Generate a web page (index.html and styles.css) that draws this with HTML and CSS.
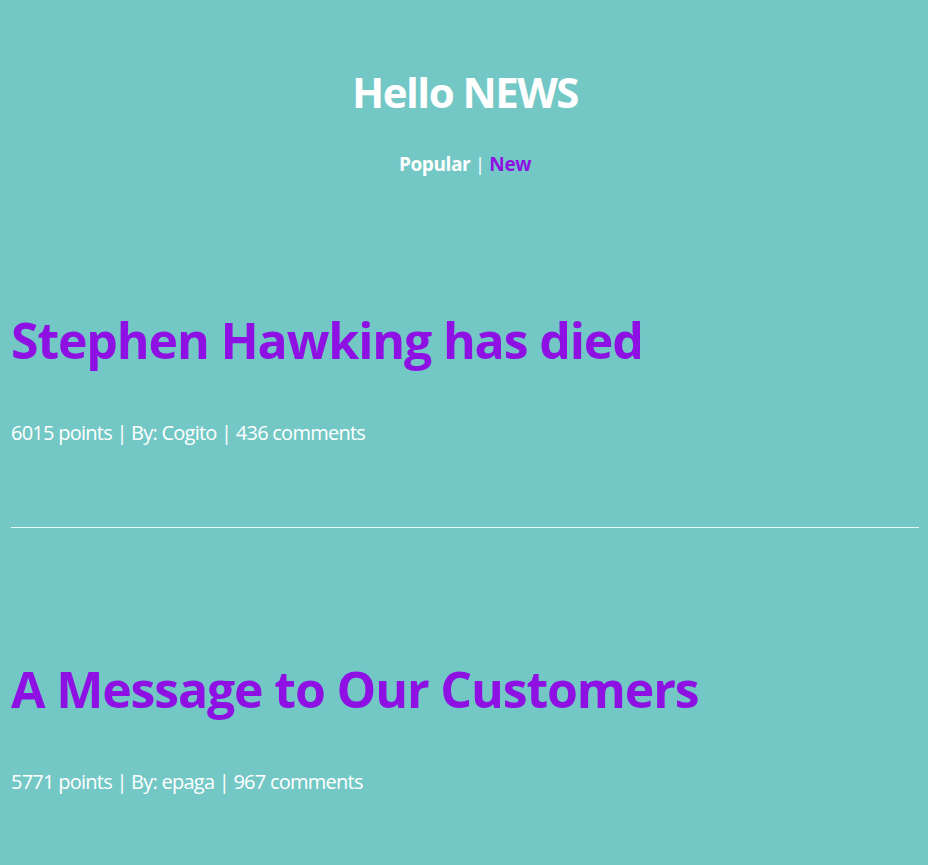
FILE: index.html
```html
<!DOCTYPE html>
<html lang="en">
<head>
<meta charset="utf-8">
<title>Hello NEWS</title>
<link rel="stylesheet" href="styles.css">
</head>
<body>
<div class="page">
  <header class="header">
    <h1 class="site-title">Hello NEWS</h1>
    <nav class="nav"><a class="nav-link nav-active" href="#">Popular</a> <span class="sep">|</span> <a class="nav-link" href="#">New</a></nav>
  </header>
  <main class="stories">
    <article class="story">
      <h2 class="story-title"><a href="#">Stephen Hawking has died</a></h2>
      <p class="story-meta">6015 points | By: Cogito | 436 comments</p>
    </article>
    <hr class="divider">
    <article class="story">
      <h2 class="story-title"><a href="#">A Message to Our Customers</a></h2>
      <p class="story-meta">5771 points | By: epaga | 967 comments</p>
    </article>
  </main>
</div>
</body>
</html>
```
FILE: styles.css
```css
html, body {
  margin: 0;
  padding: 0;
  background: #73c8c6;
}
body {
  font-family: "Open Sans", "Noto Sans", sans-serif;
  color: #ffffff;
}
.page {
  padding: 0 9px 0 11px;
}
.header {
  padding-top: 66px;
  text-align: center;
}
.site-title {
  margin: 0;
  font-size: 42px;
  line-height: 52px;
  font-weight: 700;
  letter-spacing: -1.5px;
  color: #ffffff;
}
.nav {
  margin-top: 34px;
  font-size: 19px;
  line-height: 24px;
  letter-spacing: -0.4px;
}
.nav-link {
  font-weight: 700;
  color: #8f10e3;
  text-decoration: none;
}
.nav-active {
  color: #ffffff;
}
.sep {
  color: #ffffff;
}
.story {
  padding: 133px 0 81px;
}
.divider + .story {
  padding-top: 130px;
}
.story-title {
  margin: 0;
  font-size: 50px;
  line-height: 62px;
  font-weight: 700;
  letter-spacing: -1.15px;
}
.story-title a {
  color: #8f10e3;
  text-decoration: none;
}
.story-meta {
  margin: 49px 0 0;
  font-size: 20px;
  line-height: 26px;
  letter-spacing: -0.75px;
  color: #ffffff;
}
.divider {
  margin: 0;
  border: 0;
  border-top: 1px solid rgba(255, 255, 255, 0.85);
  height: 0;
}
```
